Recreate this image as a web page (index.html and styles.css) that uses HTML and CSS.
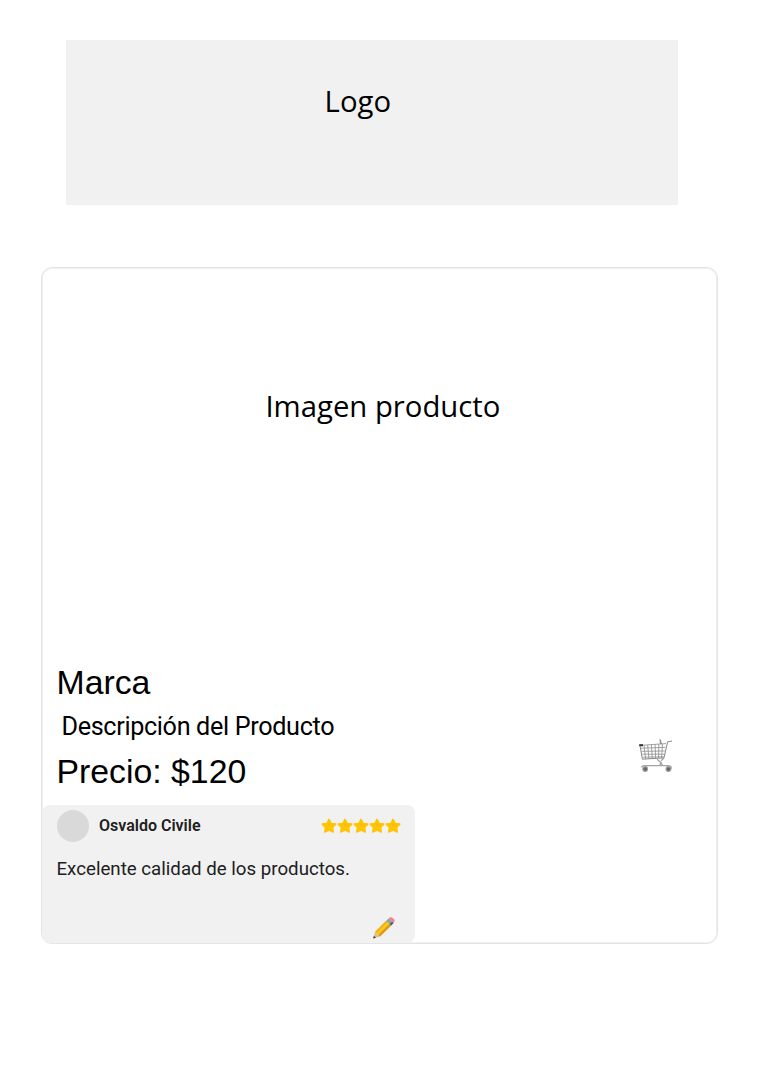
FILE: index.html
```html
<!DOCTYPE html>
<html lang="es">
<head>
<meta charset="utf-8">
<title>Producto</title>
<link rel="stylesheet" href="styles.css">
</head>
<body>
<header class="logo"><span class="logo-text">Logo</span></header>
<main class="card">
  <div class="photo"><span class="photo-text">Imagen producto</span></div>
  <div class="details">
    <div class="info">
      <h1 class="brand">Marca</h1>
      <p class="description">Descripción del Producto</p>
      <p class="price">Precio: $120</p>
    </div>
    <svg class="cart" viewBox="0 0 36 36" fill="none" aria-label="Carrito">
      <path d="M2 6.4 28 4.6M3 9.2 27.3 8.4M3.7 12.3 26.8 12M4.3 15.2 26.2 15.2M5 18.2 25.6 17.8M6 6.2 7.6 19.8M9.7 6 10.9 19.6M13.4 5.7 14.3 19.4M17.1 5.5 17.6 19.2M20.8 5.2 20.6 19M24.5 5 23.6 18.8" stroke="#8b8b8b" stroke-width=".8"/>
      <path d="M2 6.4 4.4 20.2 26 18.8 29.6 2.8 34 2M22.3 5V.5M22 .5l1.6 4.5" stroke="#888" stroke-width="1"/>
      <path d="M19 20.2 22.8 23.4 22 26M26 19 23 21.8M22.8 23.4 24.5 26.6M3.4 28.6C3.4 27 5.5 26.4 9 26.6H30.5C33 26.8 33.5 28 33 30" stroke="#a3a3a3" stroke-width="1.3"/>
      <path d="M1.2 5.2h3.8v2H1.2z" fill="#24323d"/>
      <circle cx="7.2" cy="30" r="2.4" fill="#666" stroke="#a1a1a1" stroke-width="1.1"/>
      <circle cx="30.4" cy="30" r="2.4" fill="#666" stroke="#a1a1a1" stroke-width="1.1"/>
    </svg>
  </div>
  <section class="review">
    <div class="review-head">
      <span class="avatar"></span>
      <span class="author">Osvaldo Civile</span>
      <svg class="stars" viewBox="0 0 80 16" aria-label="5 estrellas">
        <defs><path id="star" d="M8 1.4 10.1 5.5 14.7 6.1 11.5 9.4 12.2 14 8 12 3.8 14 4.5 9.4 1.3 6.1 5.9 5.5Z"/></defs>
        <g fill="#ffc403" stroke="#ffc403" stroke-width="1.6" stroke-linejoin="round">
          <use href="#star"/><use href="#star" x="16"/><use href="#star" x="32"/><use href="#star" x="48"/><use href="#star" x="64"/>
        </g>
      </svg>
    </div>
    <p class="comment">Excelente calidad de los productos.</p>
    <svg class="pencil" viewBox="0 0 24 24" aria-label="Editar">
      <path d="M1.2 22.6 3 15.9 7.9 20.6Z" fill="#e3bb8c"/>
      <path d="M1.2 22.6 1.9 19.8 4 21.8Z" fill="#3c4248"/>
      <path d="M3 15.9 14.2 4.7 19.2 9.4 7.9 20.6Z" fill="#fdc51f"/>
      <path d="M6.3 19 17.5 7.8 19.2 9.4 7.9 20.6Z" fill="#d69c16"/>
      <path d="M3 15.9 14.2 4.7 15.4 5.8 4.2 17Z" fill="#eeb019"/>
      <path d="M14.2 4.7 16.6 2.4 21.5 7.1 19.2 9.4Z" fill="#82a5b5"/>
      <path d="M17.8 8.1 20.1 5.8 21.5 7.1 19.2 9.4Z" fill="#455c69"/>
      <path d="M16.6 2.4C18 1 19.6.9 21.4 2.6S22.9 5.8 21.5 7.1Z" fill="#f18290"/>
    </svg>
  </section>
</main>
</body>
</html>
```
FILE: styles.css
```css
* { box-sizing: border-box; }
body {
  margin: 0;
  padding: 40px 0 0 41px;
  background: #fff;
  color: #000;
  font-family: "Liberation Sans", Arial, sans-serif;
}
h1, p { margin: 0; font-weight: 400; white-space: nowrap; }
.logo {
  width: 612px;
  height: 165px;
  margin: 0 0 62px 25px;
  padding: 41px 0 0 258.6px;
  background: #f1f1f1;
}
.logo-text, .photo-text {
  font: 29.3px/40px "Open Sans", sans-serif;
  white-space: nowrap;
  display: block;
}
.card {
  width: 677px;
  height: 677px;
  border: 1px solid #e4e4e4;
  border-radius: 11px;
  box-shadow: inset 0 0 0 1px #f0f0f0;
  overflow: hidden;
}
.photo { height: 392px; padding: 118px 0 0 223.4px; }
.details { display: flex; justify-content: space-between; height: 145px; padding: 0 43px 0 14.5px; }
.brand, .price { font-size: 33.8px; }
.brand { line-height: 44px; }
.description {
  padding: 1px 0 0 5px;
  font: 25.2px/44px Roboto, sans-serif;
  letter-spacing: -0.34px;
}
.price { line-height: 44px; }
.cart { width: 36px; height: 36px; margin-top: 79px; }
.review {
  display: flex;
  flex-direction: column;
  width: 373px;
  height: 138px;
  padding: 4px 14.5px 0 14.5px;
  background: #f1f1f1;
  border-radius: 8px;
  color: #202020;
  font-family: Roboto, sans-serif;
}
.review-head { display: flex; align-items: center; height: 33px; }
.avatar { width: 32px; height: 32px; border-radius: 50%; background: #d9d9d9; }
.author { margin-left: 10.5px; font-size: 16px; font-weight: 600; white-space: nowrap; }
.stars { width: 80px; height: 16px; margin-left: auto; }
.comment { margin-top: 15px; font-size: 18.7px; line-height: 24px; }
.pencil { width: 24px; height: 24px; margin: 35px 5px 0 auto; }
```
